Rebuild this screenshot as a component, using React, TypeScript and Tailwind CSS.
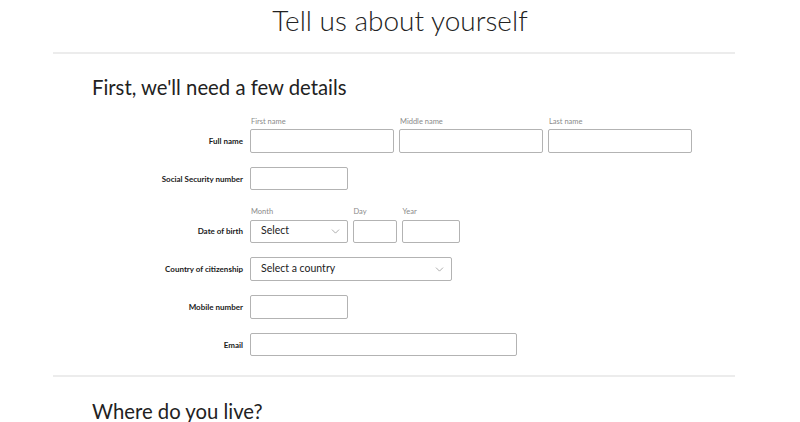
import React from 'react';
import { ChevronDown } from 'lucide-react';

const font = { fontFamily: 'Lato, "Open Sans", "Liberation Sans", sans-serif' };

const inputCls = 'h-[23.5px] border border-[#b3b3b3] rounded-[2px] bg-white';

const Row: React.FC<{ label: string; children: React.ReactNode }> = ({ label, children }) => (
  <div className="flex items-end">
    <div className="w-[158px] pr-[7px] h-[23.5px] flex items-center justify-end text-[8px] font-bold text-[#1a1a1a]">
      {label}
    </div>
    {children}
  </div>
);

const SubLabel: React.FC<{ text: string }> = ({ text }) => (
  <span className="text-[7.5px] text-[#8a8a8a] leading-[9px] pt-[2.5px] mb-[3.5px] pl-[1px]">{text}</span>
);

const Field: React.FC<{ label?: string; w: string }> = ({ label, w }) => (
  <div className={`flex flex-col ${w}`}>
    {label && <SubLabel text={label} />}
    <div className={inputCls} />
  </div>
);

const SelectBox: React.FC<{ label?: string; w: string; text: string }> = ({ label, w, text }) => (
  <div className={`flex flex-col ${w}`}>
    {label && <SubLabel text={label} />}
    <div className={`${inputCls} flex items-center justify-between pl-[10px] pr-[5px]`}>
      <span className="text-[10.5px] text-[#222]">{text}</span>
      <ChevronDown className="w-[13px] h-[13px] text-[#777]" strokeWidth={1.1} />
    </div>
  </div>
);

export default function App() {
  return (
    <div className="w-[800px] h-[422px] bg-white overflow-hidden" style={font}>
      <h1 className="text-center text-[28px] font-light text-[#222] leading-[38px] pt-[1px]">
        Tell us about yourself
      </h1>
      <div className="ml-[53px] w-[682px] mt-[13px] h-[2px] bg-[#ececec]" />

      <div className="pl-[92px]">
        <h2 className="text-[20.3px] text-[#222] leading-[24px] mt-[21px]">First, we'll need a few details</h2>
      </div>

      <div className="pl-[92px] mt-[15px] flex flex-col gap-[14.3px]">
        <Row label="Full name">
          <div className="flex gap-[5.5px]">
            <Field label="First name" w="w-[143.5px]" />
            <Field label="Middle name" w="w-[143.5px]" />
            <Field label="Last name" w="w-[143.5px]" />
          </div>
        </Row>

        <Row label="Social Security number">
          <Field w="w-[97.5px]" />
        </Row>

        <Row label="Date of birth">
          <div className="flex gap-[5px]">
            <SelectBox label="Month" w="w-[97.5px]" text="Select" />
            <Field label="Day" w="w-[44px]" />
            <Field label="Year" w="w-[58px]" />
          </div>
        </Row>

        <Row label="Country of citizenship">
          <SelectBox w="w-[201.5px]" text="Select a country" />
        </Row>

        <Row label="Mobile number">
          <Field w="w-[97.5px]" />
        </Row>

        <Row label="Email">
          <Field w="w-[267px]" />
        </Row>
      </div>

      <div className="ml-[53px] w-[682px] mt-[19px] h-[2px] bg-[#ececec]" />

      <div className="pl-[92px]">
        <h2 className="text-[20.3px] text-[#222] leading-[24px] mt-[22px]">Where do you live?</h2>
      </div>
    </div>
  );
}
